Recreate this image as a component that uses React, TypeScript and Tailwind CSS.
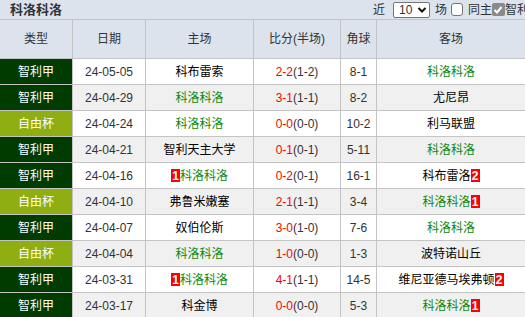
const rows = [
  { type: "智利甲", date: "24-05-05", home: "科布雷索", homeGreen: false, hb: "", score: "2-2", half: "(1-2)", corner: "8-1", away: "科洛科洛", awayGreen: true, ab: "" },
  { type: "智利甲", date: "24-04-29", home: "科洛科洛", homeGreen: true, hb: "", score: "3-1", half: "(1-1)", corner: "8-2", away: "尤尼昂", awayGreen: false, ab: "" },
  { type: "自由杯", date: "24-04-24", home: "科洛科洛", homeGreen: true, hb: "", score: "0-0", half: "(0-0)", corner: "10-2", away: "利马联盟", awayGreen: false, ab: "" },
  { type: "智利甲", date: "24-04-21", home: "智利天主大学", homeGreen: false, hb: "", score: "0-1", half: "(0-1)", corner: "5-11", away: "科洛科洛", awayGreen: true, ab: "" },
  { type: "智利甲", date: "24-04-16", home: "科洛科洛", homeGreen: true, hb: "1", score: "0-2", half: "(0-1)", corner: "16-1", away: "科布雷洛", awayGreen: false, ab: "2" },
  { type: "自由杯", date: "24-04-10", home: "弗鲁米嫩塞", homeGreen: false, hb: "", score: "2-1", half: "(1-1)", corner: "3-4", away: "科洛科洛", awayGreen: true, ab: "1" },
  { type: "智利甲", date: "24-04-07", home: "奴伯伦斯", homeGreen: false, hb: "", score: "3-0", half: "(1-0)", corner: "7-6", away: "科洛科洛", awayGreen: true, ab: "" },
  { type: "自由杯", date: "24-04-04", home: "科洛科洛", homeGreen: true, hb: "", score: "1-0", half: "(0-0)", corner: "1-3", away: "波特诺山丘", awayGreen: false, ab: "" },
  { type: "智利甲", date: "24-03-31", home: "科洛科洛", homeGreen: true, hb: "1", score: "4-1", half: "(1-1)", corner: "14-5", away: "维尼亚德马埃弗顿", awayGreen: false, ab: "2" },
  { type: "智利甲", date: "24-03-17", home: "科金博", homeGreen: false, hb: "", score: "0-0", half: "(0-0)", corner: "5-3", away: "科洛科洛", awayGreen: true, ab: "1" },
];

const Badge = ({ n }: { n: string }) =>
  n ? (
    <span className="inline-flex h-[13px] w-[9px] items-center justify-center bg-[#ff0000] text-[12px] font-bold leading-none text-white">
      {n}
    </span>
  ) : null;

const cell = "flex items-center justify-center border-r border-b border-[#c4c4c4]";

const App = () => {
  return (
    <div className="h-[317px] w-[525px] overflow-hidden bg-white text-[12px] text-[#333] [font-family:'Liberation_Sans','Noto_Sans_CJK_SC',sans-serif]">
      <div className="flex h-[19px] items-center bg-[#dce3ed]">
        <span className="pl-[10px] text-[13px] font-bold text-[#333]">科洛科洛</span>
        <div className="ml-auto flex items-center whitespace-nowrap text-[12px] text-[#333]">
          <span className="mr-[8px]">近</span>
          <div className="flex h-[16px] w-[37px] items-center justify-between rounded-[2px] border border-[#767676] bg-white pl-[5px] pr-[2px]">
            <span>10</span>
            <svg width="10" height="8" viewBox="0 0 10 8">
              <path d="M1.5 2 L5 5.5 L8.5 2" fill="none" stroke="#111" strokeWidth="2" />
            </svg>
          </div>
          <span className="ml-[5px]">场</span>
          <span className="ml-[4px] h-[13px] w-[12px] rounded-[3px] border border-[#767676] bg-white" />
          <span className="ml-[5px]">同主</span>
          <span className="flex h-[13px] w-[13px] items-center justify-center rounded-[2px] bg-[#8a8a8a]">
            <svg width="10" height="10" viewBox="0 0 10 10">
              <path d="M1.5 5 L4 7.5 L8.5 2" fill="none" stroke="#fff" strokeWidth="2" />
            </svg>
          </span>
          <span className="-mr-[4px]">智利</span>
        </div>
      </div>

      <div className="grid grid-cols-[73px_73px_108px_87px_36px_148px]">
        {["类型", "日期", "主场", "比分(半场)", "角球", "客场"].map((h, i) => (
          <div
            key={h}
            className={`${cell} h-[40px] border-t bg-[#dce3ed] ${i === 5 ? "border-r-0" : ""}`}
          >
            {h}
          </div>
        ))}

        {rows.map((r, i) => {
          const bg = i % 2 === 0 ? "bg-white" : "bg-[#f0f0f0]";
          return [
            <div
              key={`t${i}`}
              className={`${cell} h-[26px] text-white ${r.type === "自由杯" ? "bg-[#8fae12]" : "bg-[#003b00]"}`}
            >
              {r.type}
            </div>,
            <div key={`d${i}`} className={`${cell} h-[26px] ${bg}`}>
              {r.date}
            </div>,
            <div
              key={`h${i}`}
              className={`${cell} h-[26px] ${bg} ${r.homeGreen ? "text-[#118a11]" : "text-black"}`}
            >
              <Badge n={r.hb} />
              {r.home}
            </div>,
            <div key={`s${i}`} className={`${cell} h-[26px] ${bg}`}>
              <span className="text-[#ff0000]">{r.score}</span>
              <span>{r.half}</span>
            </div>,
            <div key={`c${i}`} className={`${cell} h-[26px] ${bg}`}>
              {r.corner}
            </div>,
            <div
              key={`a${i}`}
              className={`${cell} h-[26px] border-r-0 ${bg} ${r.awayGreen ? "text-[#118a11]" : "text-black"}`}
            >
              {r.away}
              <Badge n={r.ab} />
            </div>,
          ];
        })}
      </div>
    </div>
  );
};

export default App;
